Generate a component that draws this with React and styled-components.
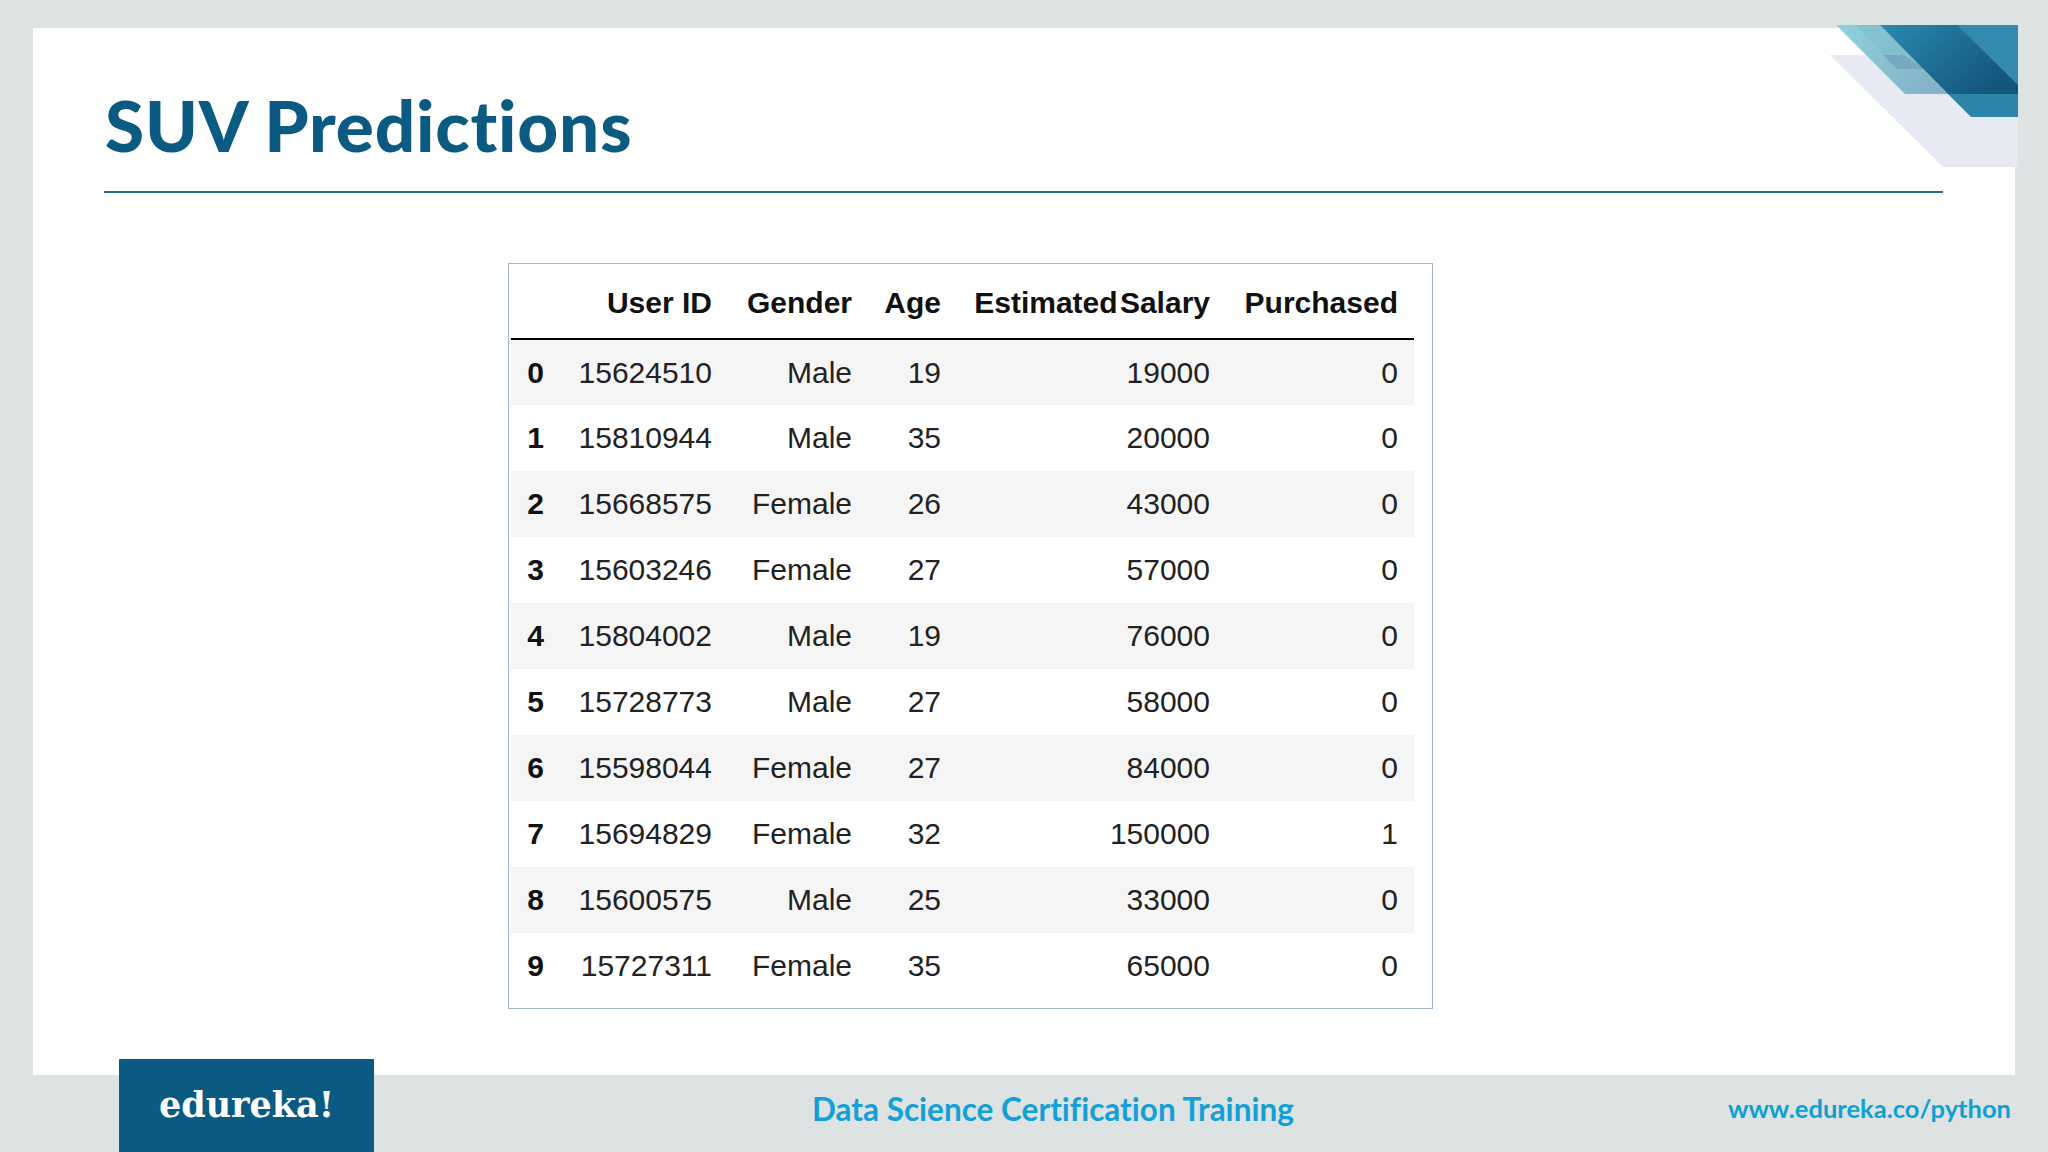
import React from 'react';
import styled, { createGlobalStyle } from 'styled-components';

const GlobalStyle = createGlobalStyle`
    html, body {
        margin: 0;
        padding: 0;
    }
    body {
        width: 2048px;
        height: 1152px;
        overflow: hidden;
        background: #dde3e2;
        font-family: 'Liberation Sans', Arial, sans-serif;
    }
`;

const Page = styled.div`
    position: relative;
    display: flex;
    flex-direction: column;
    width: 2048px;
    height: 1152px;
    padding-top: 28px;
    box-sizing: border-box;
`;

const Slide = styled.main`
    display: flex;
    flex-direction: column;
    height: 1047px;
    margin: 0 33px;
    padding: 0 72px 0 71px;
    box-sizing: border-box;
    background: #fff;
`;

const Title = styled.h1`
    margin: 0;
    height: 163px;
    padding: 55px 0 0 1px;
    box-sizing: border-box;
    font-family: Lato, sans-serif;
    font-size: 71px;
    line-height: 84px;
    font-weight: 900;
    letter-spacing: 0.8px;
    font-variant-ligatures: none;
    color: #0a5a82;
`;

const Rule = styled.hr`
    width: 100%;
    height: 2px;
    margin: 0;
    border: 0;
    background: #2d6a86;
`;

const TableBox = styled.div`
    align-self: flex-start;
    width: 925px;
    height: 746px;
    margin: 70px 0 0 404px;
    padding: 0 18px 0 2px;
    box-sizing: border-box;
    border: 1px solid #a0b6cc;
    background: #fff;
`;

const DataTable = styled.table`
    width: 903px;
    table-layout: fixed;
    border-collapse: collapse;
    font-size: 30px;
    color: #222;
`;

const HeadCell = styled.th`
    height: 75px;
    padding: 3px 16px 0 0;
    box-sizing: border-box;
    border-bottom: 2px solid #000;
    text-align: right;
    font-weight: 700;
    color: #111;
    white-space: nowrap;
    word-spacing: ${(props) => (props.$tightWords ? '-6px' : 'normal')};
`;

const Row = styled.tr`
    height: 66px;
    background: ${(props) => (props.$striped ? '#f5f5f6' : '#fff')};
`;

const IndexCell = styled.th`
    padding: 0 15px 0 0;
    text-align: right;
    font-weight: 700;
    color: #111;
`;

const Cell = styled.td`
    padding: 0 16px 0 0;
    text-align: right;
    white-space: nowrap;
`;

const Footer = styled.footer`
    display: flex;
    align-items: flex-start;
    height: 77px;
`;

const LogoBlock = styled.div`
    flex: none;
    display: flex;
    justify-content: center;
    width: 255px;
    height: 93px;
    margin: -16px 0 0 119px;
    background: #0a5a82;
`;

const LogoText = styled.span`
    padding-top: 22px;
    font-family: 'DejaVu Serif', serif;
    font-size: 35px;
    line-height: 48px;
    font-weight: 700;
    color: #fff;
`;

const CourseName = styled.div`
    margin: 14px 0 0 438px;
    font-family: Lato, sans-serif;
    font-size: 31.5px;
    line-height: 40px;
    font-weight: 700;
    font-variant-ligatures: none;
    color: #149fd6;
    white-space: nowrap;
`;

const SiteLink = styled.div`
    margin: 15px 37px 0 auto;
    font-family: Lato, sans-serif;
    font-size: 25.5px;
    line-height: 36px;
    font-weight: 700;
    color: #0fa0d2;
    white-space: nowrap;
`;

const CornerArt = styled.svg`
    position: absolute;
    top: 0;
    right: 0;
    width: 300px;
    height: 200px;
`;

const columns = [
    { label: '', width: 48 },
    { label: 'User ID', width: 169 },
    { label: 'Gender', width: 140 },
    { label: 'Age', width: 89 },
    { label: 'Estimated Salary', width: 269 },
    { label: 'Purchased', width: 188 },
];

const rows = [
    [15624510, 'Male', 19, 19000, 0],
    [15810944, 'Male', 35, 20000, 0],
    [15668575, 'Female', 26, 43000, 0],
    [15603246, 'Female', 27, 57000, 0],
    [15804002, 'Male', 19, 76000, 0],
    [15728773, 'Male', 27, 58000, 0],
    [15598044, 'Female', 27, 84000, 0],
    [15694829, 'Female', 32, 150000, 1],
    [15600575, 'Male', 25, 33000, 0],
    [15727311, 'Female', 35, 65000, 0],
];

const Corner = () => (
    <CornerArt viewBox="0 0 300 200">
        <defs>
            <linearGradient id="deep" x1="0" y1="0" x2="1" y2="0.6">
                <stop offset="0" stopColor="#2a8ab0" />
                <stop offset="1" stopColor="#14557c" />
            </linearGradient>
            <linearGradient id="pale" x1="0" y1="0" x2="1" y2="0.6">
                <stop offset="0" stopColor="#8ed2dc" />
                <stop offset="1" stopColor="#86b3c8" />
            </linearGradient>
        </defs>
        <polygon points="82,55 270,55 270,167 195,167" fill="#e7eaf2" />
        <polygon points="88,25 132,25 200,94 157,94" fill="url(#pale)" />
        <polygon points="107,25 132,25 177,69 150,69" fill="#7fbfcc" opacity="0.7" />
        <polygon points="135,55 155,55 177,69 149,69" fill="#78a8bf" />
        <polygon points="132,25 270,25 270,94 200,94" fill="url(#deep)" />
        <polygon points="209,25 270,25 270,85" fill="#338aae" />
        <polygon points="200,94 270,94 270,117 223,117" fill="#2d86aa" />
    </CornerArt>
);

const App = () => (
    <Page>
        <GlobalStyle />
        <Corner />
        <Slide>
            <Title>SUV Predictions</Title>
            <Rule />
            <TableBox>
                <DataTable>
                    <colgroup>
                        {columns.map((col) => (
                            <col key={col.label} width={col.width} />
                        ))}
                    </colgroup>
                    <thead>
                        <tr>
                            {columns.map((col) => (
                                <HeadCell
                                    key={col.label}
                                    $tightWords={col.label === 'Estimated Salary'}
                                >
                                    {col.label}
                                </HeadCell>
                            ))}
                        </tr>
                    </thead>
                    <tbody>
                        {rows.map((row, i) => (
                            <Row key={row[0]} $striped={i % 2 === 0}>
                                <IndexCell>{i}</IndexCell>
                                {row.map((value, j) => (
                                    <Cell key={j}>{value}</Cell>
                                ))}
                            </Row>
                        ))}
                    </tbody>
                </DataTable>
            </TableBox>
        </Slide>
        <Footer>
            <LogoBlock>
                <LogoText>edureka!</LogoText>
            </LogoBlock>
            <CourseName>Data Science Certification Training</CourseName>
            <SiteLink>www.edureka.co/python</SiteLink>
        </Footer>
    </Page>
);

export default App;
